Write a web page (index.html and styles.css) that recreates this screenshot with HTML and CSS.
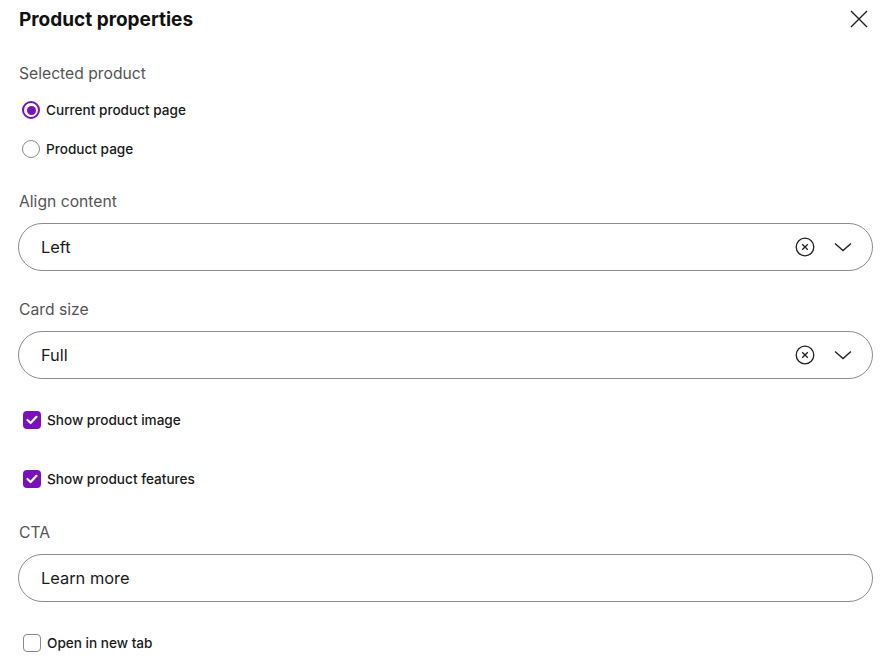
FILE: index.html
```html
<!DOCTYPE html>
<html lang="en">
<head>
  <meta charset="UTF-8" />
  <meta name="viewport" content="width=device-width, initial-scale=1.0" />
  <title>Product properties</title>
  <link rel="stylesheet" href="styles.css">
</head>
<body>

  <aside class="panel">
    <header class="panel-header">
      <h1>Product properties</h1>
      <button class="close" aria-label="Close">
        <svg width="18" height="18" viewBox="0 0 18 18"><path d="M1 1L17 17M17 1L1 17" stroke="#222" stroke-width="1.4" fill="none"/></svg>
      </button>
    </header>

    <section class="field field-radios">
      <div class="label">Selected product</div>
      <label class="option">
        <span class="radio checked"></span>
        Current product page
      </label>
      <label class="option">
        <span class="radio"></span>
        Product page
      </label>
    </section>

    <section class="field field-select">
      <div class="label">Align content</div>
      <div class="select">
        <span class="value">Left</span>
        <span class="clear">
          <svg width="20" height="20" viewBox="0 0 20 20"><circle cx="10" cy="10" r="8.8" stroke="#222" stroke-width="1.3" fill="none"/><path d="M7.2 7.2L12.8 12.8M12.8 7.2L7.2 12.8" stroke="#222" stroke-width="1.3"/></svg>
        </span>
        <span class="chevron">
          <svg width="18" height="10" viewBox="0 0 18 10"><path d="M1 1.5L9 8.5L17 1.5" stroke="#222" stroke-width="1.4" fill="none"/></svg>
        </span>
      </div>
    </section>

    <section class="field field-select">
      <div class="label">Card size</div>
      <div class="select">
        <span class="value">Full</span>
        <span class="clear">
          <svg width="20" height="20" viewBox="0 0 20 20"><circle cx="10" cy="10" r="8.8" stroke="#222" stroke-width="1.3" fill="none"/><path d="M7.2 7.2L12.8 12.8M12.8 7.2L7.2 12.8" stroke="#222" stroke-width="1.3"/></svg>
        </span>
        <span class="chevron">
          <svg width="18" height="10" viewBox="0 0 18 10"><path d="M1 1.5L9 8.5L17 1.5" stroke="#222" stroke-width="1.4" fill="none"/></svg>
        </span>
      </div>
    </section>

    <section class="field field-checks">
      <label class="option">
        <span class="checkbox checked">
          <svg width="12" height="10" viewBox="0 0 12 10"><path d="M1.5 5L4.6 8L10.5 1.8" stroke="#fff" stroke-width="2.2" fill="none" stroke-linecap="round" stroke-linejoin="round"/></svg>
        </span>
        Show product image
      </label>
      <label class="option">
        <span class="checkbox checked">
          <svg width="12" height="10" viewBox="0 0 12 10"><path d="M1.5 5L4.6 8L10.5 1.8" stroke="#fff" stroke-width="2.2" fill="none" stroke-linecap="round" stroke-linejoin="round"/></svg>
        </span>
        Show product features
      </label>
    </section>

    <section class="field field-input">
      <div class="label">CTA</div>
      <div class="text-input">Learn more</div>
      <label class="option">
        <span class="checkbox"></span>
        Open in new tab
      </label>
    </section>
  </aside>

</body>
</html>
```

FILE: styles.css
```css
body {
  margin: 0;
  font-family: Inter, 'Noto Sans', sans-serif;
  background: #fff;
  color: #1a1a1a;
}

.panel {
  padding: 0 15px 0 18px;
}

.panel-header {
  display: flex;
  justify-content: space-between;
  align-items: center;
  height: 38px;
}

.panel-header h1 {
  margin: 0 0 0 1px;
  font-size: 19px;
  font-weight: 700;
  letter-spacing: 0;
  color: #111;
}

.close {
  background: none;
  border: none;
  padding: 0;
  margin-right: 5px;
  width: 18px;
  height: 18px;
  display: flex;
  cursor: pointer;
}

.label {
  font-size: 15.7px;
  line-height: 24px;
  padding-top: 1px;
  color: #555;
  margin-left: 1px;
}

.option {
  display: flex;
  align-items: center;
  gap: 6px;
  height: 24px;
  font-size: 13.6px;
  font-weight: 500;
  color: #1a1a1a;
  margin-left: 4px;
}

.field-radios {
  margin-top: 23px;
}

.field-radios .label {
  margin-bottom: 12px;
}

.field-radios .option + .option {
  margin-top: 15px;
}

.radio {
  box-sizing: border-box;
  width: 18px;
  height: 18px;
  border-radius: 50%;
  border: 1.5px solid #8a8a8a;
  display: flex;
  align-items: center;
  justify-content: center;
}

.radio.checked {
  border: 2px solid #7a10b8;
}

.radio.checked::after {
  content: '';
  width: 9px;
  height: 9px;
  border-radius: 50%;
  background: #7a10b8;
}

.field-select {
  margin-top: 28px;
}

.field-select + .field-select {
  margin-top: 26px;
}

.field-select .label,
.field-input .label {
  margin-bottom: 9px;
}

.select,
.text-input {
  box-sizing: border-box;
  height: 48px;
  border: 1px solid #8c8c8c;
  border-radius: 24px;
  display: flex;
  align-items: center;
  padding: 0 20px 0 22px;
  font-size: 16.4px;
  color: #1a1a1a;
}

.select .value {
  flex: 1;
}

.clear,
.chevron {
  display: flex;
}

.clear {
  margin-right: 19px;
}

.field-checks {
  margin-top: 29px;
}

.field-checks .option + .option {
  margin-top: 35px;
}

.checkbox {
  box-sizing: border-box;
  width: 18px;
  height: 18px;
  border-radius: 4px;
  border: 1.5px solid #8a8a8a;
  display: flex;
  align-items: center;
  justify-content: center;
  margin-left: 1px;
}

.checkbox.checked {
  border: none;
  background: #7a10b8;
}

.field-input {
  margin-top: 29px;
}

.field-input .option {
  margin-top: 29px;
}
```
